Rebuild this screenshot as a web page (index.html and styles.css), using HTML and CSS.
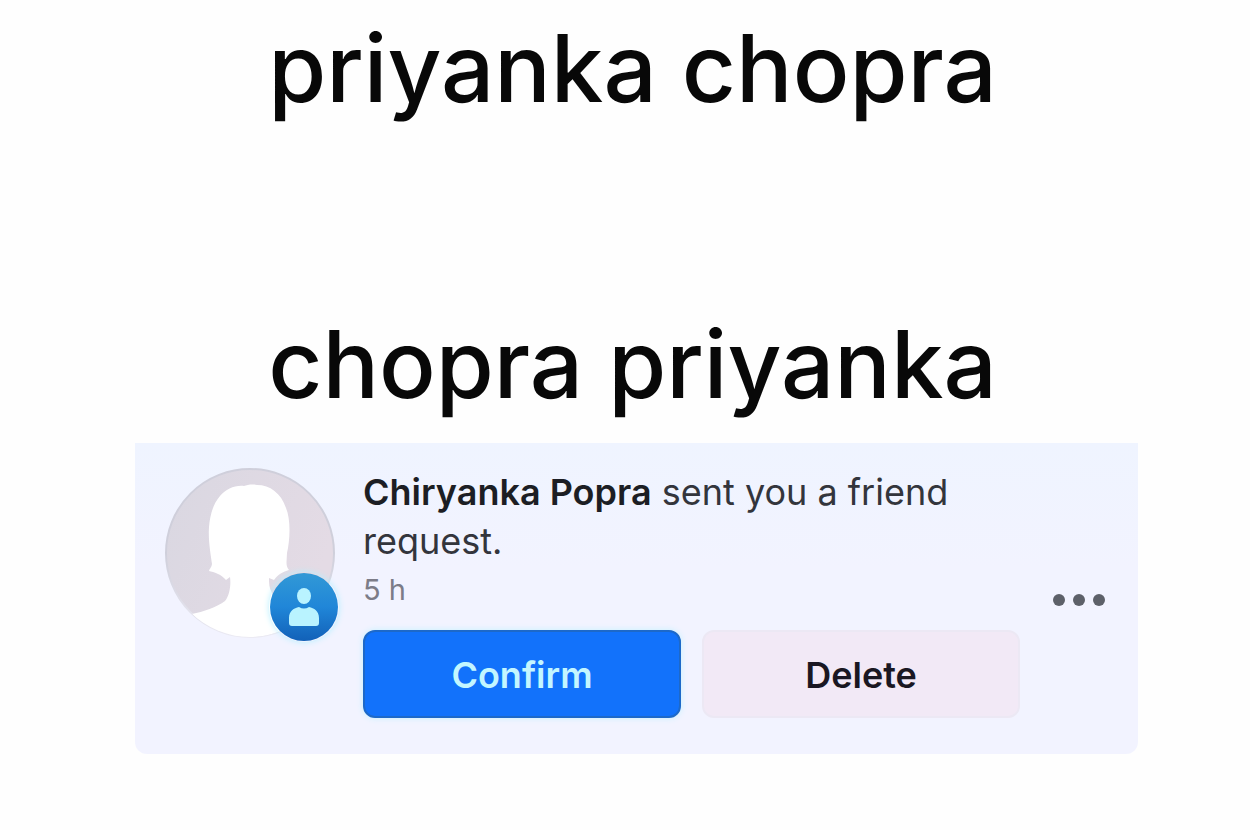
FILE: index.html
```
<!DOCTYPE html>
<html lang="en">
<head>
    <meta charset="UTF-8">
    <meta name="viewport" content="width=device-width, initial-scale=1.0">
    <title>priyanka chopra</title>
    <link rel="stylesheet" href="styles.css">
</head>
<body>

    <main class="post">
        <h1 class="caption">priyanka chopra</h1>
        <h1 class="caption">chopra priyanka</h1>

        <div class="request">
            <div class="avatar">
                <svg class="photo" viewBox="0 0 170 170" aria-hidden="true">
                    <defs>
                        <linearGradient id="photoBg" x1="0" y1="0" x2="1" y2="0.4">
                            <stop offset="0" stop-color="#d9d7e1"/>
                            <stop offset="1" stop-color="#e4dbe5"/>
                        </linearGradient>
                        <linearGradient id="photoEdge" x1="0" y1="0" x2="0" y2="1">
                            <stop offset="0.5" stop-color="#cfcfdb"/>
                            <stop offset="1" stop-color="#ebeaf3"/>
                        </linearGradient>
                        <clipPath id="photoClip"><circle cx="85" cy="85" r="84"/></clipPath>
                    </defs>
                    <circle cx="85" cy="85" r="84" fill="url(#photoBg)" stroke="url(#photoEdge)" stroke-width="2"/>
                    <path clip-path="url(#photoClip)" fill="#fff" d="M79 18C70 17 61 21 55 28C48 36 45 47 44 59C43 73 46 88 47 96C47 99 44 101 44 103C49 104 56 106 61 112L65 109C66 116 65 127 60 133C52 139 38 144 27 146C42 162 61 169 85 169C109 169 134 158 148 140C135 138 113 134 107 125C104 120 104 115 104 110L109 112C113 106 118 104 124 102C120 98 122 91 122 85C125 72 126 52 121 40C116 25 105 17 92 17C87 16 82 17 79 18Z"/>
                </svg>
                <svg class="badge" viewBox="0 0 70 70" aria-hidden="true">
                    <defs>
                        <linearGradient id="badgeBg" x1="0" y1="0" x2="0" y2="1">
                            <stop offset="0" stop-color="#3199d6"/>
                            <stop offset="0.5" stop-color="#2086d8"/>
                            <stop offset="1" stop-color="#1261b8"/>
                        </linearGradient>
                    </defs>
                    <circle cx="35" cy="35" r="34" fill="url(#badgeBg)"/>
                    <ellipse cx="35" cy="24" rx="7" ry="8" fill="#b9f3ff"/>
                    <path d="M20 51V46C20 39 25 36 30 35Q35 38 40 35C45 36 50 39 50 46V51Q50 54 47 54H23Q20 54 20 51Z" fill="#b9f3ff"/>
                </svg>
            </div>

            <div class="details">
                <p class="message"><strong>Chiryanka Popra</strong> sent you a friend request.</p>
                <p class="time">5 h</p>
                <div class="actions">
                    <button class="btn confirm" type="button">Confirm</button>
                    <button class="btn delete" type="button">Delete</button>
                </div>
            </div>

            <button class="more" type="button" aria-label="More options">
                <svg viewBox="0 0 52 12" width="52" height="12" aria-hidden="true">
                    <circle cx="6" cy="6" r="6"/>
                    <circle cx="26" cy="6" r="6"/>
                    <circle cx="46" cy="6" r="6"/>
                </svg>
            </button>
        </div>
    </main>

</body>
</html>
```
FILE: styles.css
```
* {
    box-sizing: border-box;
}

body {
    margin: 0;
    background-color: #fefefe;
    font-family: Inter, "Liberation Sans", sans-serif;
}

.post {
    padding: 8px 112px 0 135px;
}

.caption {
    margin: 0 0 176px;
    padding-right: 8px;
    text-align: center;
    font-size: 94px;
    font-weight: 500;
    line-height: 120px;
    color: #080808;
    white-space: nowrap;
}

.caption + .caption {
    margin-bottom: 19px;
}

.request {
    display: flex;
    align-items: flex-start;
    padding: 25px 33px 36px 30px;
    background: linear-gradient(#eff4ff, #f2f3ff 40%);
    border-radius: 0 0 12px 12px;
}

.avatar {
    position: relative;
    flex: none;
    width: 170px;
    height: 170px;
    margin-right: 28px;
}

.photo {
    display: block;
}

.badge {
    position: absolute;
    right: -4px;
    bottom: -4px;
    width: 70px;
    height: 70px;
    border-radius: 50%;
    box-shadow: 0 0 6px #b5efff;
}

.details {
    flex: 1;
}

.message {
    margin: 0;
    max-width: 620px;
    font-size: 36px;
    line-height: 49px;
    color: #33353c;
}

.message strong {
    font-weight: 600;
    color: #1c1e24;
}

.time {
    margin: 0 0 16px;
    font-size: 29px;
    line-height: 48px;
    color: #7c7c88;
}

.actions {
    display: flex;
    gap: 21px;
}

.btn {
    flex: 1;
    height: 88px;
    padding: 2px 0 0;
    border: 0;
    border-radius: 12px;
    font-family: inherit;
    font-size: 36px;
    font-weight: 600;
    cursor: pointer;
}

.confirm {
    border: 2px solid #1d69c9;
    background-color: #1272fb;
    box-shadow: 0 0 6px #c4f1ff;
    color: #c3f6ff;
}

.delete {
    border: 2px solid #ece8f4;
    background-color: #f2e9f6;
    color: #1a1722;
}

.more {
    display: flex;
    align-self: center;
    margin: 14px 0 0 33px;
    padding: 0;
    border: 0;
    background: none;
    fill: #5d6069;
    cursor: pointer;
}
```
